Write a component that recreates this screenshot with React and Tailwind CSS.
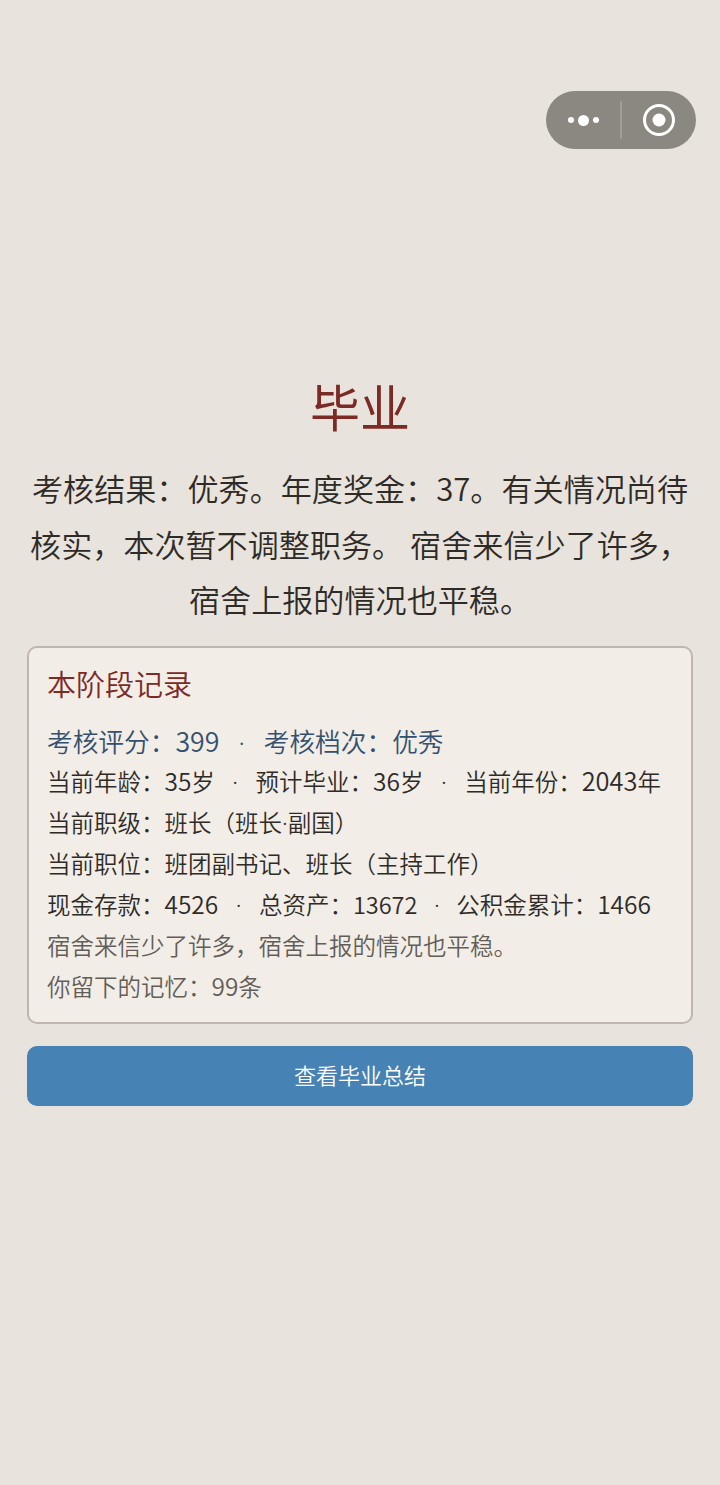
const font = { fontFamily: '"Noto Sans CJK SC", sans-serif' };
function Row({ className = "", children }) {
  return <p className={`h-[41px] whitespace-pre ${className}`}>{children}</p>;
}
function D({ children }) {
  return <span className="text-[1.04em] leading-[0]">{children}</span>;
}
function Dot({ className = "mx-[17.5px]" }) {
  return <span className={`font-['Noto_Sans'] leading-[0] ${className}`}>·</span>;
}
export default function App() {
  return (
    <div className="relative flex h-[1485px] w-[720px] flex-col justify-center overflow-hidden bg-[#e8e3dc] px-[27px] pb-[6px] font-[350]" style={font}>
      <div className="absolute left-[546px] top-[91px] flex h-[58px] w-[150px] items-center rounded-full bg-[#8a8880]">
        <div className="flex w-[74px] items-center justify-center gap-[4px]">
          <span className="h-[6px] w-[6px] rounded-full bg-white" />
          <span className="h-[11px] w-[11px] rounded-full bg-white" />
          <span className="h-[6px] w-[6px] rounded-full bg-white" />
        </div>
        <div className="h-[38px] w-[2px] bg-[#a09e97]" />
        <div className="flex flex-1 items-center justify-center">
          <svg width="32" height="32" viewBox="0 0 32 32">
            <circle cx="16" cy="16" r="14.5" fill="none" stroke="#fff" strokeWidth="3" />
            <circle cx="16" cy="16" r="6.5" fill="#fff" />
          </svg>
        </div>
      </div>
      <h1 className="text-center text-[50px] font-normal leading-[64px] text-[#7b2a24]">毕业</h1>
      <p className="mt-[23px] -mx-[1px] text-center text-[31.1px] leading-[55.5px] text-[#2e2b27]">
        考核结果：优秀。年度奖金：37。有关情况尚待核实，本次暂不调整职务。 宿舍来信少了许多，宿舍上报的情况也平稳。
      </p>
      <section className="mt-[19px] h-[378px] rounded-[10px] border-2 border-[#c2b5b0] bg-[#f2ede7] px-[18px] pt-[14px]">
        <h2 className="text-[29px] leading-[42px] text-[#7b2a24]">本阶段记录</h2>
        <div className="mt-[16px] text-[23.5px] leading-[41px] text-[#2e2b27]">
          <Row className="text-[25.7px] text-[#34506f]">考核评分：<D>399</D><Dot className="mx-[19px]" />考核档次：优秀</Row>
          <Row>当前年龄：<D>35</D>岁<Dot />预计毕业：<D>36</D>岁<Dot />当前年份：<span className="text-[1.08em] leading-[0]">2043</span>年</Row>
          <Row>当前职级：班长（班长<Dot className="" />副国）</Row>
          <Row>当前职位：班团副书记、班长（主持工作）</Row>
          <Row>现金存款：<D>4526</D><Dot />总资产：13672<Dot className="mx-[16.5px]" />公积金累计：<D>1466</D></Row>
          <Row className="text-[#625d57]">宿舍来信少了许多，宿舍上报的情况也平稳。</Row>
          <Row className="text-[#625d57]">你留下的记忆：<D>99</D>条</Row>
        </div>
      </section>
      <button className="mt-[22px] h-[60px] rounded-[10px] bg-[#4682b4] pb-[2px] text-[22px] text-white">查看毕业总结</button>
    </div>
  );
}
